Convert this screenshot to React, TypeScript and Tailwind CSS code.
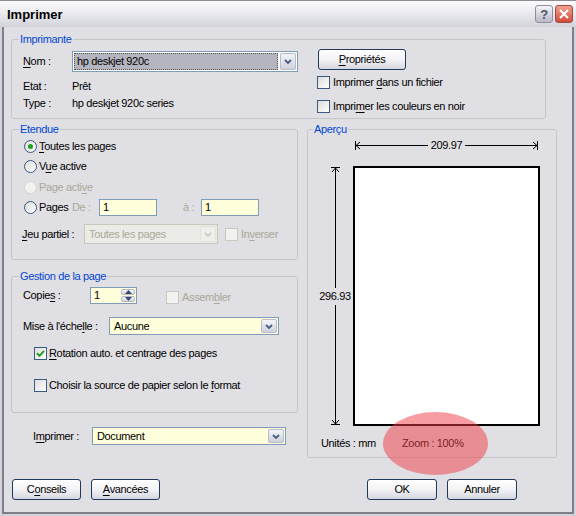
import React from "react"

type Kids = { children?: React.ReactNode; className?: string }

function U({ children }: Kids) {
  return <span className="underline decoration-1 underline-offset-[2px]">{children}</span>
}

function GroupBox({ title, className = "", children }: Kids & { title: string }) {
  return (
    <fieldset className={`min-w-0 rounded-[3px] border border-[#c6c6ca] ${className}`}>
      <legend className="ml-[7px] px-[1px] leading-[13px] text-[#0046d5]">{title}</legend>
      {children}
    </fieldset>
  )
}

function Check({ checked, disabled }: { checked?: boolean; disabled?: boolean }) {
  return (
    <span
      className={`flex h-[13px] w-[13px] shrink-0 items-center justify-center border ${
        disabled ? "border-[#cac8bb] bg-[#f2f2f0]" : "border-[#3a5a80] bg-linear-to-br from-[#dcdcdc] to-white"
      }`}
    >
      {checked && (
        <svg width="9" height="9" viewBox="0 0 9 9">
          <path d="M1 4.2 L3.5 6.8 L8 1.8" fill="none" stroke="#21a121" strokeWidth="2" />
        </svg>
      )}
    </span>
  )
}

function Radio({ checked, disabled }: { checked?: boolean; disabled?: boolean }) {
  return (
    <span
      className={`flex h-[13px] w-[13px] shrink-0 items-center justify-center rounded-full border ${
        disabled ? "border-[#d4d3cc] bg-[#f2f2f0]" : "border-[#3a5a80] bg-linear-to-br from-[#dcdcdc] to-white"
      }`}
    >
      {checked && <span className="h-[5px] w-[5px] rounded-full bg-[#21a121]" />}
    </span>
  )
}

function DropBtn({ disabled }: { disabled?: boolean }) {
  return (
    <span
      className={`flex w-[16px] shrink-0 items-center justify-center rounded-[2px] border ${
        disabled ? "border-[#e2e2de] bg-[#eeeeea]" : "border-[#b6bccb] bg-linear-to-b from-[#f4f5f8] to-[#cdd1dc]"
      }`}
    >
      <svg width="8" height="5" viewBox="0 0 8 5">
        <path d="M1 1 L4 4 L7 1" fill="none" stroke={disabled ? "#cfcfc8" : "#4a5d80"} strokeWidth="1.8" />
      </svg>
    </span>
  )
}

function Combo({ value, className = "", disabled }: { value: React.ReactNode; className?: string; disabled?: boolean }) {
  return (
    <div
      className={`flex border p-[1px] ${
        disabled ? "border-[#cac8bb] bg-[#ebebe7] text-[#aca899]" : "border-[#7f9db9] bg-[#ffffdc]"
      } ${className}`}
    >
      <span className="flex flex-1 items-center pl-[3px]">{value}</span>
      <DropBtn disabled={disabled} />
    </div>
  )
}

function Field({ value, className = "" }: { value: string; className?: string }) {
  return (
    <div className={`flex items-center border border-[#7f9db9] bg-[#ffffdc] pl-[3px] ${className}`}>{value}</div>
  )
}

function Btn({ children, className = "" }: Kids) {
  return (
    <div
      className={`flex h-[21px] items-center justify-center rounded-[3px] border border-[#22385c] bg-linear-to-b from-white via-[#f3f3f6] to-[#d5d6df] ${className}`}
    >
      {children}
    </div>
  )
}

function Gray({ children, className = "" }: Kids) {
  return <span className={`text-[#aca899] ${className}`}>{children}</span>
}

function TitleBar() {
  return (
    <div className="flex h-[27px] shrink-0 items-center border-t border-[#8c8c94] bg-linear-to-b from-[#fbfbfd] via-[#e9e9ef] to-[#d2d2da] pl-[7px] pr-[3px]">
      <span className="text-[13px] font-bold tracking-normal">Imprimer</span>
      <div className="ml-auto flex gap-[2px]">
        <div className="flex h-[18px] w-[18px] items-center justify-center rounded-[3px] border border-[#8f8fa0] bg-linear-to-b from-[#f4f4f8] to-[#b9b9c8] text-[13px] font-bold text-[#50505c]">
          ?
        </div>
        <div className="flex h-[18px] w-[18px] items-center justify-center rounded-[3px] border border-[#9a4a44] bg-linear-to-b from-[#f2a090] to-[#d24a3a]">
          <svg width="10" height="10" viewBox="0 0 10 10">
            <path d="M1 1 L9 9 M9 1 L1 9" stroke="white" strokeWidth="2" />
          </svg>
        </div>
      </div>
    </div>
  )
}

function HDim() {
  return (
    <div className="ml-[47px] mt-[3px] flex h-[13px] w-[183px] items-center">
      <svg width="6" height="9" viewBox="0 0 6 9" className="shrink-0">
        <path d="M0.5 0 V9 M1 4.5 L5 1 M1 4.5 L5 8 M1 4.5 H6" stroke="black" strokeWidth="1" fill="none" />
      </svg>
      <div className="h-px flex-1 bg-black" />
      <span className="px-[3px]">209.97</span>
      <div className="h-px flex-1 bg-black" />
      <svg width="6" height="9" viewBox="0 0 6 9" className="shrink-0">
        <path d="M5.5 0 V9 M5 4.5 L1 1 M5 4.5 L1 8 M5 4.5 H0" stroke="black" strokeWidth="1" fill="none" />
      </svg>
    </div>
  )
}

function VDim() {
  return (
    <div className="ml-[10px] flex w-[34px] flex-col items-center py-[1px]">
      <svg width="9" height="6" viewBox="0 0 9 6" className="shrink-0">
        <path d="M0 0.5 H9 M4.5 1 L1 5 M4.5 1 L8 5 M4.5 1 V6" stroke="black" strokeWidth="1" fill="none" />
      </svg>
      <div className="w-px flex-1 bg-black" />
      <span className="py-[2px]">296.93</span>
      <div className="w-px flex-1 bg-black" />
      <svg width="9" height="6" viewBox="0 0 9 6" className="shrink-0">
        <path d="M0 5.5 H9 M4.5 5 L1 1 M4.5 5 L8 1 M4.5 5 V0" stroke="black" strokeWidth="1" fill="none" />
      </svg>
    </div>
  )
}

export default function App() {
  return (
    <div className="relative flex h-[516px] w-[576px] flex-col bg-[#d3d4db] font-['Liberation_Sans',Arial,sans-serif] text-[11px] leading-[13px] tracking-[-0.35px] text-black">
      <TitleBar />
      <div className="flex flex-1 flex-col px-[2px] pb-[2px]">
        <div className="flex flex-1 flex-col border-x-2 border-b-2 border-[#7e7e88] bg-[#e0dfe3] pl-[7px] pt-[6px]">
          {/* Imprimante */}
          <GroupBox title="Imprimante" className="h-[86px] w-[535px]">
            <div className="flex items-start pl-[11px]">
              <div className="mt-[5px] flex w-[275px] flex-col">
                <div className="flex h-[21px] items-center">
                  <span className="w-[49px]">
                    <U>N</U>om :
                  </span>
                  <div className="flex h-[21px] w-[226px] border border-[#7f9db9] bg-white p-[1px]">
                    <span className="flex flex-1 items-center border border-dotted border-[#555] bg-[#b4b5bf] pl-[2px]">
                      hp deskjet 920c
                    </span>
                    <span className="w-[2px]" />
                    <DropBtn />
                  </div>
                </div>
                <div className="mt-[8px] flex h-[13px] items-center">
                  <span className="w-[49px]">Etat :</span>
                  <span>Prêt</span>
                </div>
                <div className="mt-[4px] flex h-[13px] items-center">
                  <span className="w-[49px]">Type :</span>
                  <span>hp deskjet 920c series</span>
                </div>
              </div>
              <div className="ml-[20px] mt-[3px] flex flex-col">
                <Btn className="w-[88px]">
                  <span>
                    <U>P</U>ropriétés
                  </span>
                </Btn>
                <div className="-ml-[1px] mt-[6px] flex h-[13px] items-center gap-[3px]">
                  <Check />
                  <span>
                    Imprimer <U>d</U>ans un fichier
                  </span>
                </div>
                <div className="-ml-[1px] mt-[11px] flex h-[13px] items-center gap-[3px]">
                  <Check />
                  <span>
                    Impri<U>m</U>er les couleurs en noir
                  </span>
                </div>
              </div>
            </div>
          </GroupBox>

          <div className="mt-[4px] flex">
            <div className="flex w-[287px] flex-col">
              {/* Etendue */}
              <GroupBox title="Etendue" className="h-[137px] w-[287px]">
                <div className="flex flex-col pl-[12px]">
                  <div className="flex h-[20px] items-center gap-[2px]">
                    <Radio checked />
                    <span>
                      <U>T</U>outes les pages
                    </span>
                  </div>
                  <div className="flex h-[21px] items-center gap-[2px]">
                    <Radio />
                    <span>
                      V<U>u</U>e active
                    </span>
                  </div>
                  <div className="flex h-[20px] items-center gap-[2px]">
                    <Radio disabled />
                    <Gray>
                      Page acti<U>v</U>e
                    </Gray>
                  </div>
                  <div className="flex h-[21px] items-center">
                    <Radio />
                    <span className="ml-[2px] w-[33px]">Pages</span>
                    <Gray className="w-[27px]">De :</Gray>
                    <Field value="1" className="h-[17px] w-[58px]" />
                    <Gray className="ml-[26px] w-[18px]">à :</Gray>
                    <Field value="1" className="h-[17px] w-[58px]" />
                  </div>
                  <div className="-ml-[2px] mt-[6px] flex h-[20px] items-center">
                    <span className="w-[62px]">
                      <U>J</U>eu partiel :
                    </span>
                    <Combo value="Toutes les pages" disabled className="h-[20px] w-[134px]" />
                    <span className="ml-[7px] flex items-center gap-[3px]">
                      <Check disabled />
                      <Gray>
                        In<U>v</U>erser
                      </Gray>
                    </span>
                  </div>
                </div>
              </GroupBox>

              {/* Gestion de la page */}
              <GroupBox title="Gestion de la page" className="mt-[10px] h-[143px] w-[287px]">
                <div className="flex flex-col pl-[11px]">
                  <div className="mt-[4px] flex h-[17px] items-center">
                    <span className="w-[67px]">
                      Copie<U>s</U> :
                    </span>
                    <div className="flex h-[17px] w-[47px] border border-[#7f9db9] bg-[#ffffdc]">
                      <span className="flex flex-1 items-center pl-[3px]">1</span>
                      <div className="flex w-[16px] flex-col gap-px p-px">
                        <span className="flex flex-1 items-center justify-center rounded-[2px] border border-[#b6bccb] bg-linear-to-b from-[#f4f5f8] to-[#d3d7e0]">
                          <svg width="7" height="4" viewBox="0 0 7 4">
                            <path d="M0 4 L3.5 0 L7 4 Z" fill="#3b4a66" />
                          </svg>
                        </span>
                        <span className="flex flex-1 items-center justify-center rounded-[2px] border border-[#b6bccb] bg-linear-to-b from-[#f4f5f8] to-[#d3d7e0]">
                          <svg width="7" height="4" viewBox="0 0 7 4">
                            <path d="M0 0 L3.5 4 L7 0 Z" fill="#3b4a66" />
                          </svg>
                        </span>
                      </div>
                    </div>
                    <span className="ml-[29px] mt-[3px] flex items-center gap-[3px]">
                      <Check disabled />
                      <Gray>
                        Assem<U>b</U>ler
                      </Gray>
                    </span>
                  </div>
                  <div className="mt-[13px] flex h-[18px] items-center">
                    <span className="w-[86px]">
                      Mise à l'éche<U>l</U>le :
                    </span>
                    <Combo value="Aucune" className="h-[18px] w-[170px]" />
                  </div>
                  <div className="ml-[11px] mt-[11px] flex h-[14px] items-center gap-[2px]">
                    <Check checked />
                    <span>
                      <U>R</U>otation auto. et centrage des pages
                    </span>
                  </div>
                  <div className="ml-[11px] mt-[18px] flex h-[14px] items-center gap-[2px]">
                    <Check />
                    <span>
                      Choisir la source de papier selon le <U>f</U>ormat
                    </span>
                  </div>
                </div>
              </GroupBox>

              <div className="mt-[14px] flex h-[18px] items-center pl-[22px]">
                <span className="w-[59px]">
                  I<U>m</U>primer :
                </span>
                <Combo value="Document" className="h-[18px] w-[194px]" />
              </div>
            </div>

            {/* Aperçu */}
            <fieldset className="ml-[9px] h-[335px] w-[250px] min-w-0 rounded-[3px] border border-[#c6c6ca]">
              <legend className="ml-[5px] px-[1px] leading-[13px] text-[#0046d5]">Aperçu</legend>
              <HDim />
              <div className="mt-[14px] flex h-[260px]">
                <VDim />
                <div className="ml-[1px] w-[187px] border-2 border-black bg-white" />
              </div>
              <div className="mt-[11px] flex h-[13px] items-center pl-[13px]">
                <span className="w-[81px]">Unités : mm</span>
                <span>Zoom : 100%</span>
              </div>
            </fieldset>
          </div>

          <div className="mt-[21px] flex">
            <Btn className="ml-[1px] w-[69px]">
              <span>
                C<U>o</U>nseils
              </span>
            </Btn>
            <Btn className="ml-[10px] w-[69px]">
              <span>
                <U>A</U>vancées
              </span>
            </Btn>
            <Btn className="ml-[207px] w-[70px]">OK</Btn>
            <Btn className="ml-[10px] w-[70px]">Annuler</Btn>
          </div>
        </div>
      </div>

      <div className="pointer-events-none absolute left-[383px] top-[412px] h-[63px] w-[105px] rounded-[50%] bg-[rgba(240,60,70,0.5)]" />
    </div>
  )
}
